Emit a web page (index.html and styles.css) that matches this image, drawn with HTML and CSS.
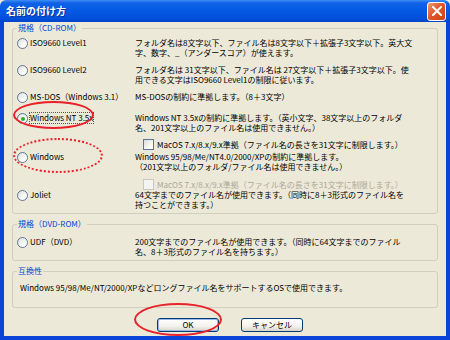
FILE: index.html
```html
<!DOCTYPE html>
<html lang="ja">
<head>
    <meta charset="UTF-8">
    <title>名前の付け方</title>
    <link rel="stylesheet" href="styles.css">
</head>
<body>

<div class="window">
    <div class="titlebar">
        <span class="title">名前の付け方</span>
        <span class="close">
            <svg width="10" height="10" viewBox="0 0 10 10"><path d="M1 1 L9 9 M9 1 L1 9" stroke="#fff" stroke-width="2" stroke-linecap="square"/></svg>
        </span>
    </div>

    <div class="client">
        <fieldset class="group g-cd">
            <legend>規格（CD-ROM）</legend>

            <div class="opt">
                <label><span class="radio"></span>ISO9660 Level1</label>
                <p>フォルダ名は8文字以下、ファイル名は8文字以下＋拡張子3文字以下。英大文<br>字、数字、_（アンダースコア）が使えます。</p>
            </div>
            <div class="opt">
                <label><span class="radio"></span>ISO9660 Level2</label>
                <p>フォルダ名は 31文字以下、ファイル名は 27文字以下＋拡張子3文字以下。使<br>用できる文字はISO9660 Level1の制限に従います。</p>
            </div>
            <div class="opt o-dos">
                <label><span class="radio"></span>MS-DOS（Windows 3.1）</label>
                <p>MS-DOSの制約に準拠します。（8＋3文字）</p>
            </div>
            <div class="opt o-nt">
                <label><span class="radio on"></span><span class="focus">Windows NT 3.5x</span></label>
                <p>Windows NT 3.5xの制約に準拠します。（英小文字、38文字以上のフォルダ<br>名、201文字以上のファイル名は使用できません。）</p>
            </div>
            <div class="chk c-nt">
                <span class="box"></span>MacOS 7.x/8.x/9.x準拠（ファイル名の長さを31文字に制限します。）
            </div>
            <div class="opt o-win">
                <label><span class="radio"></span>Windows</label>
                <p>Windows 95/98/Me/NT4.0/2000/XPの制約に準拠します。<br>（201文字以上のフォルダ/ファイル名は使用できません。）</p>
            </div>
            <div class="chk c-win disabled">
                <span class="box"></span>MacOS 7.x/8.x/9.x準拠（ファイル名の長さを31文字に制限します。）
            </div>
            <div class="opt">
                <label><span class="radio"></span>Joliet</label>
                <p>64文字までのファイル名が使用できます。（同時に8＋3形式のファイル名を<br>持つことができます。）</p>
            </div>
        </fieldset>

        <fieldset class="group g-dvd">
            <legend>規格（DVD-ROM）</legend>
            <div class="opt">
                <label><span class="radio"></span>UDF（DVD）</label>
                <p>200文字までのファイル名が使用できます。（同時に64文字までのファイル<br>名、8＋3形式のファイル名を持ちます。）</p>
            </div>
        </fieldset>

        <fieldset class="group g-compat">
            <legend>互換性</legend>
            <p>Windows 95/98/Me/NT/2000/XPなどロングファイル名をサポートするOSで使用できます。</p>
        </fieldset>

        <div class="buttons">
            <button class="btn default">OK</button>
            <button class="btn">キャンセル</button>
        </div>
    </div>

    <!-- 赤い丸の書き込み -->
    <span class="mark mark-nt"></span>
    <span class="mark dotted mark-win"></span>
    <span class="mark mark-ok"></span>
</div>

</body>
</html>
```

FILE: styles.css
```css
body {
    margin: 0;
    padding: 0;
    background-color: #ECE9D8;
}
.window {
    position: relative;
    width: 450px;
    height: 340px;
    font-family: "Noto Sans CJK JP", sans-serif;
    font-size: 8px;
    line-height: 10px;
    color: #000;
}
.titlebar {
    height: 22px;
    display: flex;
    align-items: center;
    justify-content: space-between;
    padding: 0 4px 0 6px;
    box-sizing: border-box;
    background: linear-gradient(to bottom, #3E8CF4 0, #0F62E6 3px, #0558E4 50%, #034FDB 85%, #0445C8 100%);
    border-radius: 6px 6px 0 0;
}
.title {
    color: #fff;
    font-size: 10px;
    font-weight: bold;
    text-shadow: 1px 1px 0 #0A2F9A;
}
.close {
    width: 19px;
    height: 19px;
    box-sizing: border-box;
    border: 1px solid #fff;
    border-radius: 3px;
    background: linear-gradient(135deg, #F09A7A 0, #E2572A 45%, #C9411B 100%);
    display: flex;
    align-items: center;
    justify-content: center;
}
.client {
    height: 318px;
    box-sizing: border-box;
    border: 4px solid #0A44D8;
    border-top: 0;
    padding: 1px 8px 0 8px;
}
.group {
    margin: 0;
    padding: 0 4px;
    border: 1px solid #D0D0BF;
    border-radius: 3px;
}
.group legend {
    padding: 0 1px;
    color: #0046D5;
    line-height: 10px;
}
.group p {
    margin: 0;
    white-space: nowrap;
}
.g-cd {
    padding-top: 5px;
    padding-bottom: 3px;
}
.g-dvd {
    margin-top: 5px;
    padding-top: 8px;
    padding-bottom: 3px;
}
.g-compat {
    margin-top: 5px;
    padding-top: 7px;
    padding-bottom: 14px;
}
.g-compat p {
    padding-left: 3px;
}
.opt {
    display: grid;
    grid-template-columns: 118px auto;
    margin-bottom: 7px;
}
.opt:last-child {
    margin-bottom: 0;
}
.opt label {
    display: flex;
    align-items: flex-start;
    white-space: nowrap;
}
.o-dos {
    margin-bottom: 10px;
}
.o-nt {
    margin-bottom: 6px;
}
.o-win {
    margin-bottom: 7px;
}
.radio {
    width: 11px;
    height: 11px;
    box-sizing: border-box;
    border: 1px solid #5C7597;
    border-radius: 50%;
    background: linear-gradient(135deg, #DCDCD7 0, #FFFFFF 70%);
    margin-right: 2px;
    position: relative;
}
.radio.on::after {
    content: "";
    position: absolute;
    left: 2.5px;
    top: 2.5px;
    width: 4px;
    height: 4px;
    border-radius: 50%;
    background: #2DAA2D;
}
.focus {
    outline: 1px dotted #555;
}
.chk {
    display: flex;
    align-items: center;
    margin-left: 126px;
    white-space: nowrap;
    height: 11px;
}
.c-nt {
    margin-bottom: 2px;
}
.c-win {
    margin-bottom: 0;
}
.chk .box {
    width: 11px;
    height: 11px;
    box-sizing: border-box;
    border: 1px solid #5C7597;
    background: linear-gradient(135deg, #DCDCD7 0, #FFFFFF 80%);
    margin-right: 3px;
}
.chk.disabled {
    color: #ACA899;
}
.chk.disabled .box {
    border-color: #CAC8BB;
    background: #F4F4F0;
}
.buttons {
    display: flex;
    gap: 22px;
    padding-left: 145px;
    margin-top: 10px;
}
.btn {
    width: 62px;
    height: 14px;
    padding: 0;
    border: 1px solid #003C74;
    border-radius: 3px;
    background: linear-gradient(to bottom, #FFFFFF 0, #F3F2EC 60%, #D9D4C9 100%);
    font-family: "Noto Sans CJK JP", sans-serif;
    font-size: 8px;
    line-height: 10px;
    color: #000;
}
.btn.default {
    box-shadow: inset 0 0 0 1px #9DB9EB;
}
.mark {
    position: absolute;
    border: 2px solid #E8212B;
    border-radius: 50%;
    box-sizing: border-box;
}
.mark.dotted {
    border-style: dotted;
}
.mark-nt {
    left: 13px;
    top: 101px;
    width: 81px;
    height: 28px;
}
.mark-win {
    left: 13px;
    top: 138px;
    width: 90px;
    height: 35px;
}
.mark-ok {
    left: 134px;
    top: 303px;
    width: 88px;
    height: 33px;
}
```
